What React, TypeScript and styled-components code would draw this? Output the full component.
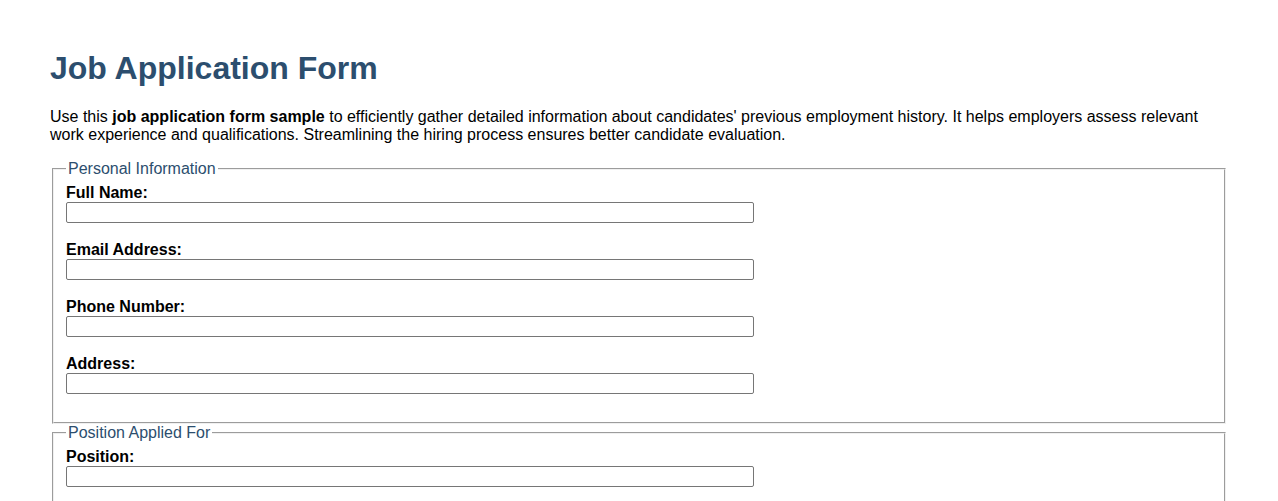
import React from 'react';
import styled, { createGlobalStyle } from 'styled-components';

const GlobalStyle = createGlobalStyle`
  body {
    margin: 0;
    background: #fff;
    font-family: 'Liberation Sans', Arial, sans-serif;
    color: #000;
  }
`;

const Page = styled.div`
  padding: 50px 50px 20px;
`;

const Title = styled.h1`
  margin: 0 0 21px;
  font-size: 32px;
  font-weight: bold;
  color: #2c4e6e;
`;

const Intro = styled.p`
  margin: 0 0 16px;
  font-size: 16px;
  line-height: 18px;
`;

const Section = styled.fieldset`
  margin: 0 2px;
  padding: 0.35em 0.75em 9.4px;
  border: 2px groove #f0f0f0;
  font-size: 16px;
`;

const Legend = styled.legend`
  padding: 0 2px;
  color: #2c4e6e;
  font-size: 16px;
`;

const Field = styled.div`
  margin-bottom: 18.3px;
`;

const Label = styled.label`
  display: block;
  font-weight: bold;
  font-size: 16px;
`;

const Input = styled.input`
  box-sizing: border-box;
  width: 60%;
  height: 21px;
  margin: 0;
  border: 1px solid #767676;
  border-radius: 2px;
  background: #fff;
`;

interface FieldDef {
  id: string;
  label: string;
  type?: string;
}

const sections: { title: string; fields: FieldDef[] }[] = [
  {
    title: 'Personal Information',
    fields: [
      { id: 'fullName', label: 'Full Name:' },
      { id: 'email', label: 'Email Address:', type: 'email' },
      { id: 'phone', label: 'Phone Number:', type: 'tel' },
      { id: 'address', label: 'Address:' },
    ],
  },
  {
    title: 'Position Applied For',
    fields: [{ id: 'position', label: 'Position:' }],
  },
];

const App: React.FC = () => {
  return (
    <Page>
      <GlobalStyle />
      <Title>Job Application Form</Title>
      <Intro>
        Use this <b>job application form sample</b> to efficiently gather detailed information about
        candidates' previous employment history. It helps employers assess relevant work experience and
        qualifications. Streamlining the hiring process ensures better candidate evaluation.
      </Intro>
      <form>
        {sections.map((s) => (
          <Section key={s.title}>
            <Legend>{s.title}</Legend>
            {s.fields.map((f) => (
              <Field key={f.id}>
                <Label htmlFor={f.id}>{f.label}</Label>
                <Input id={f.id} type={f.type || 'text'} />
              </Field>
            ))}
          </Section>
        ))}
      </form>
    </Page>
  );
};

export default App;
